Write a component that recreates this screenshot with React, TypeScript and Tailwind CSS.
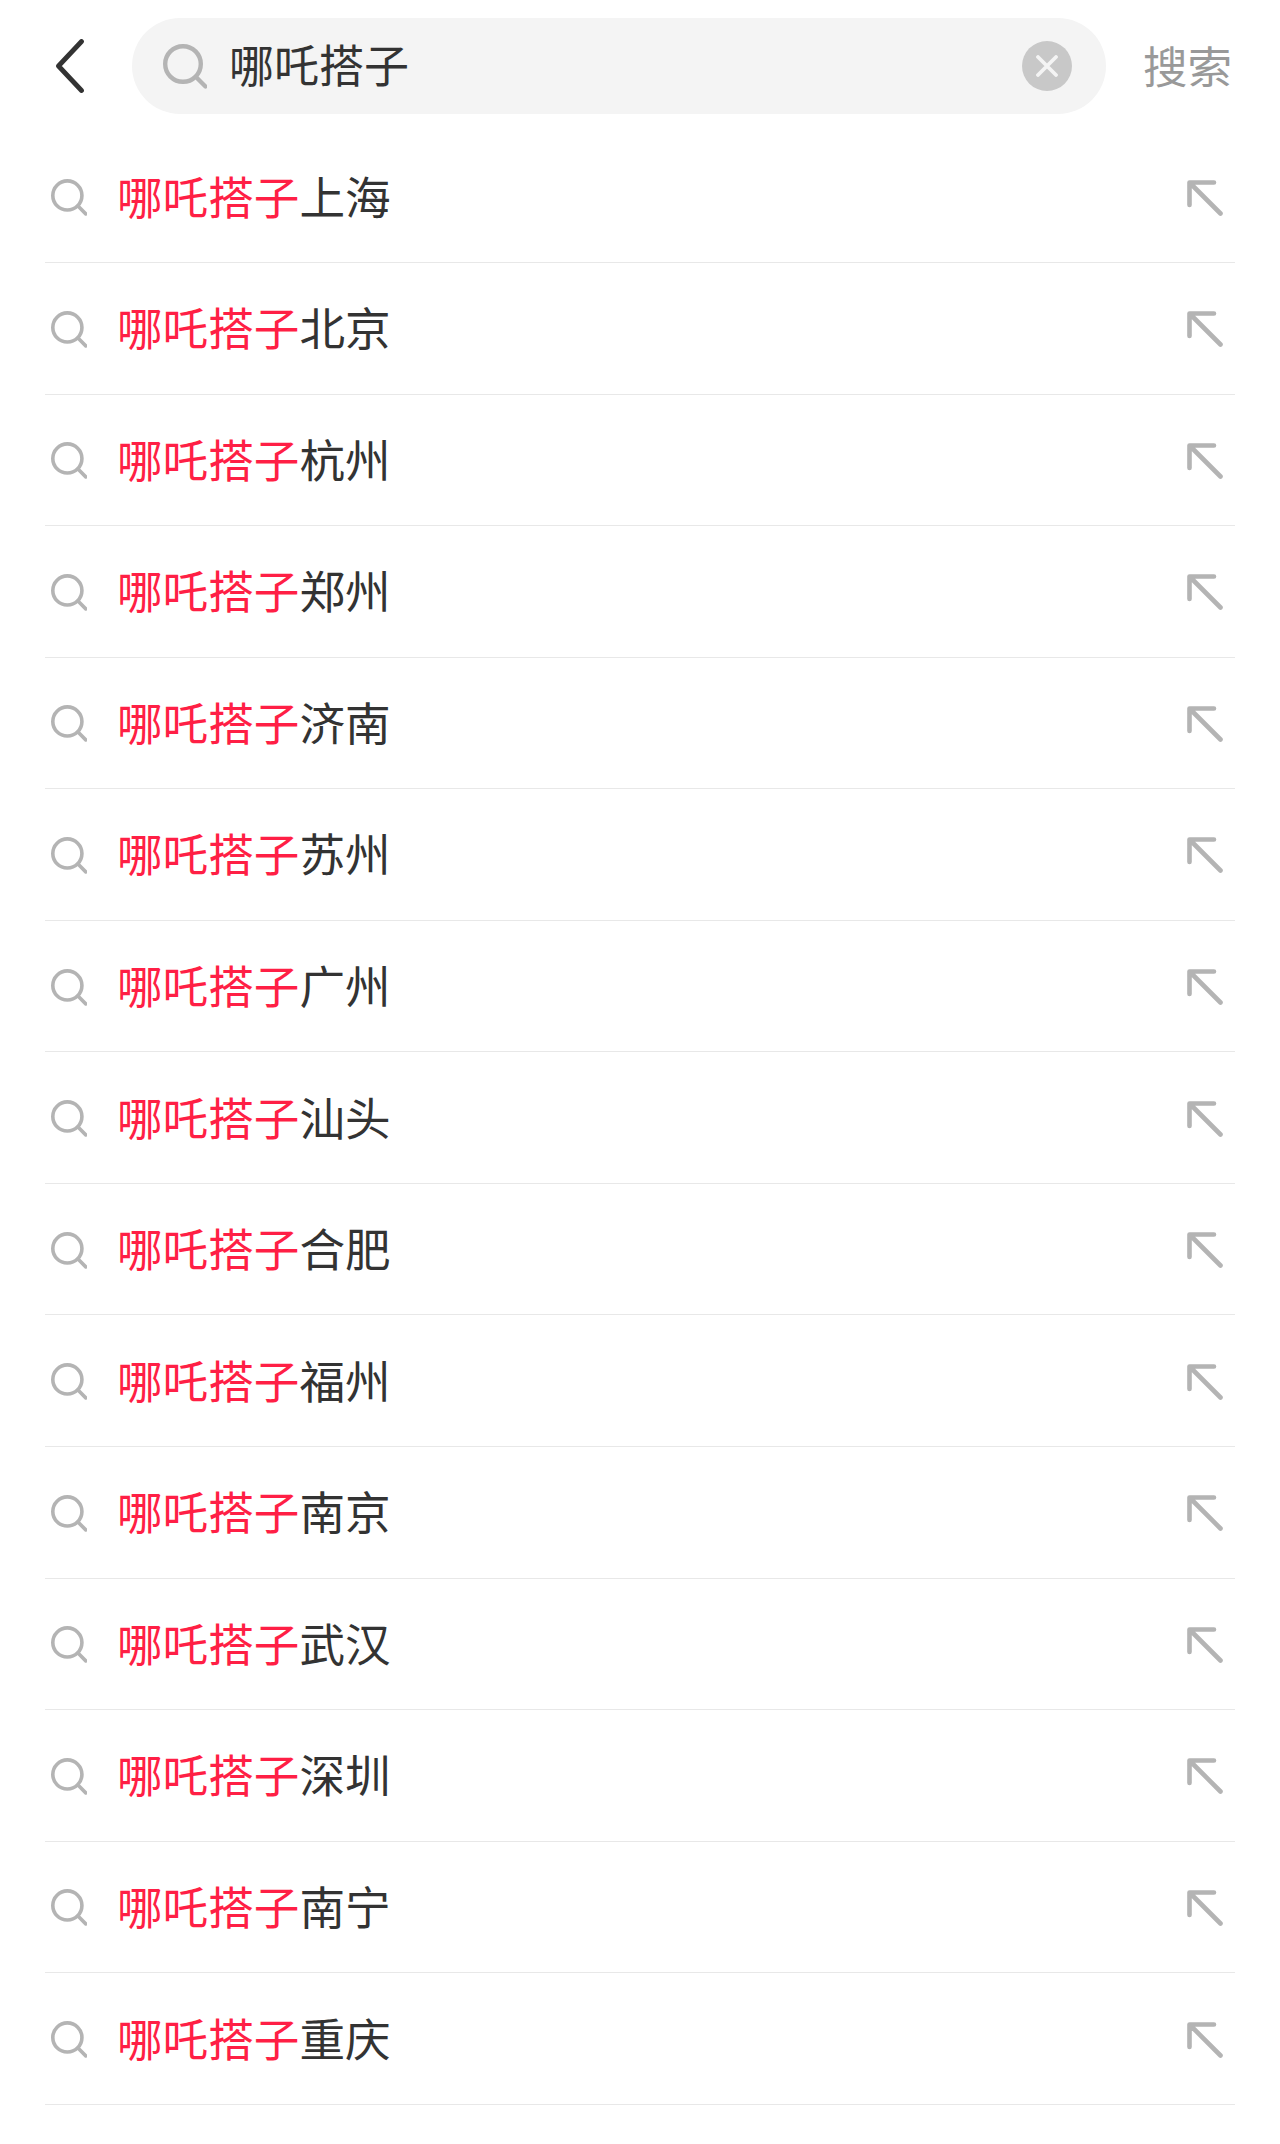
import React from 'react';

const cities = ['上海', '北京', '杭州', '郑州', '济南', '苏州', '广州', '汕头', '合肥', '福州', '南京', '武汉', '深圳', '南宁', '重庆'];

const SearchIcon = ({ className }: { className: string }) => (
  <svg viewBox="0 0 44 45" fill="none" stroke="#b4b4b4" strokeWidth="4.4" strokeLinecap="round" className={className}>
    <circle cx="20" cy="20" r="17.8" />
    <path d="M33 33L42.5 42.5" />
  </svg>
);

const App: React.FC = () => {
  return (
    <div className="w-[1280px] h-[2144px] bg-white overflow-hidden font-['Noto_Sans_CJK_SC','Noto_Sans',sans-serif]">
      <header className="h-[131.4px] flex items-start pt-[18px]">
        <div className="w-[132px] h-[96px] flex items-center pl-[56px] shrink-0">
          <svg viewBox="0 0 28 54" fill="none" stroke="#333333" strokeWidth="4.8" strokeLinecap="round" strokeLinejoin="round" className="w-[28px] h-[54px]">
            <path d="M25.5 2.5L2.5 27L25.5 51.5" />
          </svg>
        </div>
        <div className="w-[974px] h-[96px] rounded-[48px] bg-[#f4f4f4] flex items-center pl-[31px] pr-[34px] shrink-0">
          <SearchIcon className="w-[44px] h-[45px] shrink-0" />
          <span className="ml-[22px] mb-[4px] flex-1 text-[45px] leading-[96px] text-[#333333]">哪吒搭子</span>
          <div className="w-[50px] h-[50px] rounded-full bg-[#c8c8c8] flex items-center justify-center">
            <svg viewBox="0 0 22 22" fill="none" stroke="#f4f4f4" strokeWidth="3.8" strokeLinecap="round" className="w-[22px] h-[22px]">
              <path d="M2 2L20 20M20 2L2 20" />
            </svg>
          </div>
        </div>
        <span className="ml-[37px] text-[44.5px] leading-[93px] text-[#999999]">搜索</span>
      </header>
      <ul className="ml-[45px] w-[1190px]">
        {cities.map((city) => (
          <li key={city} className="h-[131.57px] border-b border-[#e8e8e8] flex items-center">
            <SearchIcon className="ml-[6px] mt-[2px] w-[36px] h-[37px] shrink-0" />
            <p className="ml-[30px] mb-[4px] flex-1 text-[45.6px] leading-[60px] text-[#333333]">
              <span className="text-[#ff1f45]">哪吒搭子</span>
              {city}
            </p>
            <svg viewBox="0 0 36 36" fill="none" stroke="#b4b4b4" strokeWidth="4.6" strokeLinecap="round" strokeLinejoin="round" className="mr-[12px] mt-[2px] w-[36px] h-[36px]">
              <path d="M2.5 25V2.5H27M3 3L33.5 33.5" />
            </svg>
          </li>
        ))}
      </ul>
    </div>
  );
};

export default App;
